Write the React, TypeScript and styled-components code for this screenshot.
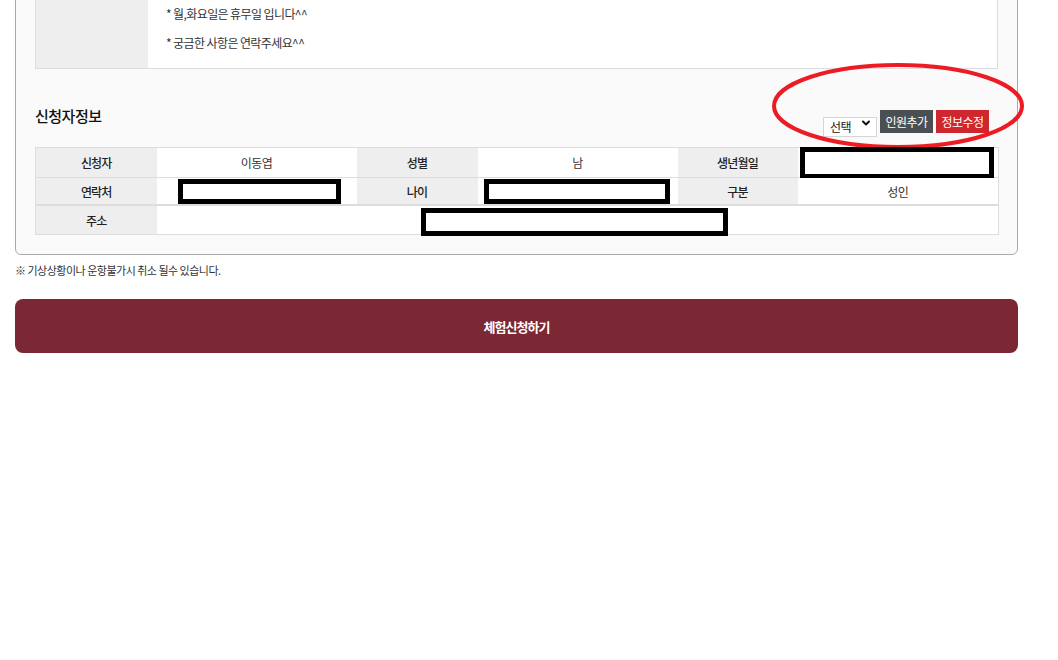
import React from "react";
import styled, { createGlobalStyle } from "styled-components";
import { ChevronDown } from "lucide-react";

const Global = createGlobalStyle`
  html, body { margin: 0; padding: 0; background: #ffffff; }
  body {
    font-family: "Noto Sans CJK KR", "Noto Sans", sans-serif;
    color: #222;
    overflow: hidden;
  }
  * { box-sizing: border-box; }
`;

const Page = styled.div`
  width: 1018px;
  padding-left: 15px;
  margin-top: -30px;
`;

const Panel = styled.section`
  background: #fafafa;
  border: 1px solid #aaaaaa;
  border-radius: 0 0 6px 6px;
  padding: 20px 19px 19px 19px;
`;

const NoticeTable = styled.div`
  display: grid;
  grid-template-columns: 112px 1fr;
  border: 1px solid #dddddd;
`;

const NoticeHead = styled.div`
  background: #eeeeee;
`;

const NoticeBody = styled.div`
  background: #ffffff;
  padding: 7px 0 11px 18px;
`;

const NoticeLine = styled.p`
  margin: 0;
  font-size: 12px;
  line-height: 29px;
  letter-spacing: -0.6px;
  color: #333;
`;

const HeaderRow = styled.div`
  position: relative;
  display: flex;
  justify-content: space-between;
  align-items: flex-end;
  height: 23px;
  margin: 41px 9px 14px 0;
`;

const Title = styled.h3`
  margin: 0 0 7px 0;
  font-size: 15px;
  line-height: 20px;
  font-weight: 500;
  letter-spacing: -0.5px;
  color: #111;
`;

const Controls = styled.div`
  display: flex;
  align-items: flex-end;
  gap: 3px;
`;

const SelectWrap = styled.div`
  position: relative;
  width: 54px;
  height: 20px;
`;

const Select = styled.select`
  appearance: none;
  -webkit-appearance: none;
  width: 100%;
  height: 100%;
  border: 1px solid #d6d6d6;
  background: #ffffff;
  font-family: inherit;
  font-size: 12px;
  letter-spacing: -0.5px;
  color: #222;
  padding: 0 0 0 6px;
  border-radius: 0;
  outline: none;
`;

const Chevron = styled.span`
  position: absolute;
  right: 5px;
  top: 4px;
  display: flex;
  pointer-events: none;
  color: #111;
`;

const ActionButton = styled.button<{ $tone: "dark" | "red" }>`
  width: 53px;
  height: 23px;
  border: 0;
  padding: 0;
  font-family: inherit;
  font-size: 12px;
  letter-spacing: -0.6px;
  color: #ffffff;
  background: ${(p) => (p.$tone === "dark" ? "#4a4f54" : "#d0262d")};
  cursor: pointer;
`;

const Annotation = styled.svg`
  position: absolute;
  left: 737px;
  top: -47px;
  width: 252px;
  height: 86px;
  overflow: visible;
  pointer-events: none;
`;

const InfoTable = styled.table`
  width: 963px;
  table-layout: fixed;
  border-collapse: collapse;
  background: #ffffff;
`;

const Th = styled.th`
  background: #eeeeee;
  border: 1px solid #dddddd;
  border-left: 0;
  border-right: 0;
  font-size: 12px;
  font-weight: 500;
  letter-spacing: -0.8px;
  color: #222;
  padding: 0;
  text-align: center;
  &:first-child { border-left: 1px solid #dddddd; }
`;

const Td = styled.td<{ $h: number }>`
  position: relative;
  height: ${(p) => p.$h}px;
  border: 1px solid #dddddd;
  border-left: 0;
  border-right: 0;
  background: #ffffff;
  font-size: 12px;
  letter-spacing: -0.6px;
  color: #333;
  padding: 0;
  text-align: center;
  &:last-child { border-right: 1px solid #dddddd; }
`;

const Redact = styled.span`
  position: absolute;
  border: 5px solid #000000;
  background: #ffffff;
`;

const SecondTable = styled(InfoTable)`
  margin-top: 0;
`;

const Note = styled.p`
  margin: 7px 0 0 0;
  font-size: 11px;
  line-height: 16px;
  letter-spacing: -0.5px;
  color: #333;
`;

const SubmitButton = styled.button`
  display: block;
  width: 1003px;
  height: 54px;
  margin-top: 21px;
  border: 0;
  border-radius: 8px;
  background: #7b2734;
  color: #ffffff;
  font-family: inherit;
  font-size: 13px;
  font-weight: 700;
  letter-spacing: -1px;
  cursor: pointer;
`;

const cols = [121, 200, 121, 200, 120, 201];

export default function App() {
  return (
    <>
      <Global />
      <Page>
        <Panel>
          <NoticeTable>
            <NoticeHead />
            <NoticeBody>
              <NoticeLine>* 월,화요일은 휴무일 입니다^^</NoticeLine>
              <NoticeLine>* 궁금한 사항은 연락주세요^^</NoticeLine>
            </NoticeBody>
          </NoticeTable>

          <HeaderRow>
            <Title>신청자정보</Title>
            <Controls>
              <SelectWrap>
                <Select defaultValue="">
                  <option value="">선택</option>
                </Select>
                <Chevron>
                  <ChevronDown size={12} strokeWidth={4} />
                </Chevron>
              </SelectWrap>
              <ActionButton $tone="dark">인원추가</ActionButton>
              <ActionButton $tone="red">정보수정</ActionButton>
            </Controls>
            <Annotation viewBox="0 0 252 86">
              <ellipse
                cx="126"
                cy="43"
                rx="124"
                ry="41"
                fill="none"
                stroke="#ec1c24"
                strokeWidth="4"
              />
            </Annotation>
          </HeaderRow>

          <InfoTable>
            <colgroup>
              {cols.map((w, i) => (
                <col key={i} style={{ width: w }} />
              ))}
            </colgroup>
            <tbody>
              <tr>
                <Th>신청자</Th>
                <Td $h={30}>이동엽</Td>
                <Th>성별</Th>
                <Td $h={30}>남</Td>
                <Th>생년월일</Th>
                <Td $h={30}>
                  <Redact style={{ left: 2, top: -1, width: 194, height: 32 }} />
                </Td>
              </tr>
              <tr>
                <Th>연락처</Th>
                <Td $h={27}>
                  <Redact style={{ left: 21, top: 1, width: 163, height: 25 }} />
                </Td>
                <Th>나이</Th>
                <Td $h={27}>
                  <Redact style={{ left: 6, top: 1, width: 186, height: 25 }} />
                </Td>
                <Th>구분</Th>
                <Td $h={27}>성인</Td>
              </tr>
            </tbody>
          </InfoTable>
          <SecondTable>
            <colgroup>
              <col style={{ width: 121 }} />
              <col style={{ width: 842 }} />
            </colgroup>
            <tbody>
              <tr>
                <Th>주소</Th>
                <Td $h={29}>
                  <Redact style={{ left: 264, top: 2, width: 307, height: 28 }} />
                </Td>
              </tr>
            </tbody>
          </SecondTable>
        </Panel>
        <Note>※ 기상상황이나 운항불가시 취소 될수 있습니다.</Note>
        <SubmitButton>체험신청하기</SubmitButton>
      </Page>
    </>
  );
}
